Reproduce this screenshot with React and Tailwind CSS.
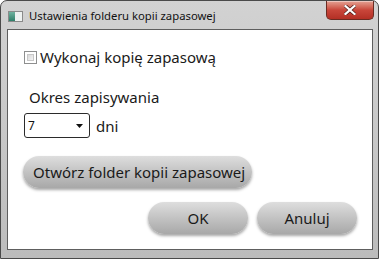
export default function App() {
    const font = { fontFamily: '"Noto Sans", "Open Sans", sans-serif' };

    return (
        <div className="w-[379px] h-[260px] bg-white" style={font}>
            {/* Window frame */}
            <div className="w-[379px] h-[259px] flex flex-col rounded-t-[7px] border border-[#4a4a4a] bg-gradient-to-b from-[#d2d2d2] via-[#c8c8c8] to-[#bcbcbc]">

                {/* Title bar */}
                <div className="h-[28px] flex items-start pl-[7px] pr-[4px]">
                    <div className="mt-[10px] w-[15px] h-[11px] flex border border-[#8a8a8a] bg-white">
                        <div className="w-[6px] h-full bg-gradient-to-b from-[#6fb3a0] to-[#2e7f6a]"></div>
                        <div className="flex-1 bg-[#eef2f1]"></div>
                    </div>
                    <p className="mt-[7px] ml-[6px] text-[11.3px] leading-[16px] text-[#111]">Ustawienia folderu kopii zapasowej</p>
                    <button className="ml-auto w-[48px] h-[19px] flex items-center justify-center rounded-b-[5px] border border-t-0 border-[#6a2b22] bg-gradient-to-b from-[#e4a294] via-[#c9463a] to-[#b32f24] shadow-[inset_0_1px_0_rgba(255,255,255,0.4)]">
                        <svg width="12" height="10" viewBox="0 0 12 10">
                            <path d="M1.5 1 L10.5 9 M10.5 1 L1.5 9" stroke="#4a1b16" strokeWidth="3.6" strokeLinecap="square" />
                            <path d="M1.5 1 L10.5 9 M10.5 1 L1.5 9" stroke="#fff" strokeWidth="2.2" strokeLinecap="square" />
                        </svg>
                    </button>
                </div>

                {/* Client area */}
                <div className="flex-1 ml-[6px] mr-[5px] mb-[8px] border border-[#5e5e5e] bg-white flex flex-col pl-[16px]">

                    {/* Checkbox */}
                    <div className="mt-[17px] h-[20px] flex items-center">
                        <div className="w-[13px] h-[13px] border border-[#8e8f8f] bg-white p-[2px]">
                            <div className="w-full h-full border border-[#c8c8c8] bg-gradient-to-br from-[#d9d9d9] to-[#f4f4f4]"></div>
                        </div>
                        <span className="ml-[3px] text-[15px] leading-[20px] text-[#1a1a1a]">Wykonaj kopię zapasową</span>
                    </div>

                    {/* Period */}
                    <p className="mt-[20px] ml-[5px] h-[20px] text-[15px] leading-[20px] text-[#1a1a1a]">Okres zapisywania</p>

                    <div className="mt-[6px] flex items-center">
                        <div className="w-[66px] h-[25px] flex items-center rounded-[3px] border border-[#2b2b2b] bg-white pl-[3px] pr-[6px]">
                            <span className="text-[12px] leading-[16px] text-[#111]">7</span>
                            <svg className="ml-auto" width="7" height="4" viewBox="0 0 7 4">
                                <path d="M0 0 H7 L3.5 4 Z" fill="#111" />
                            </svg>
                        </div>
                        <span className="ml-[6px] text-[15px] leading-[20px] text-[#1a1a1a]">dni</span>
                    </div>

                    {/* Open folder */}
                    <button className="mt-[18px] -ml-[1px] w-[229px] h-[32px] rounded-full bg-gradient-to-b from-[#dedede] to-[#a8a8a8] shadow-[0_2px_3px_rgba(0,0,0,0.35)] text-[15px] text-[#1a1a1a] text-left pl-[10px]">
                        Otwórz folder kopii zapasowej
                    </button>

                    {/* Dialog buttons */}
                    <div className="mt-[14px] flex justify-end gap-[9px] pr-[15px]">
                        <button className="w-[100px] h-[32px] rounded-full bg-gradient-to-b from-[#dedede] to-[#a8a8a8] shadow-[0_2px_3px_rgba(0,0,0,0.35)] text-[15px] text-[#1a1a1a]">OK</button>
                        <button className="w-[100px] h-[32px] rounded-full bg-gradient-to-b from-[#dedede] to-[#a8a8a8] shadow-[0_2px_3px_rgba(0,0,0,0.35)] text-[15px] text-[#1a1a1a]">Anuluj</button>
                    </div>
                </div>
            </div>
        </div>
    )
}
